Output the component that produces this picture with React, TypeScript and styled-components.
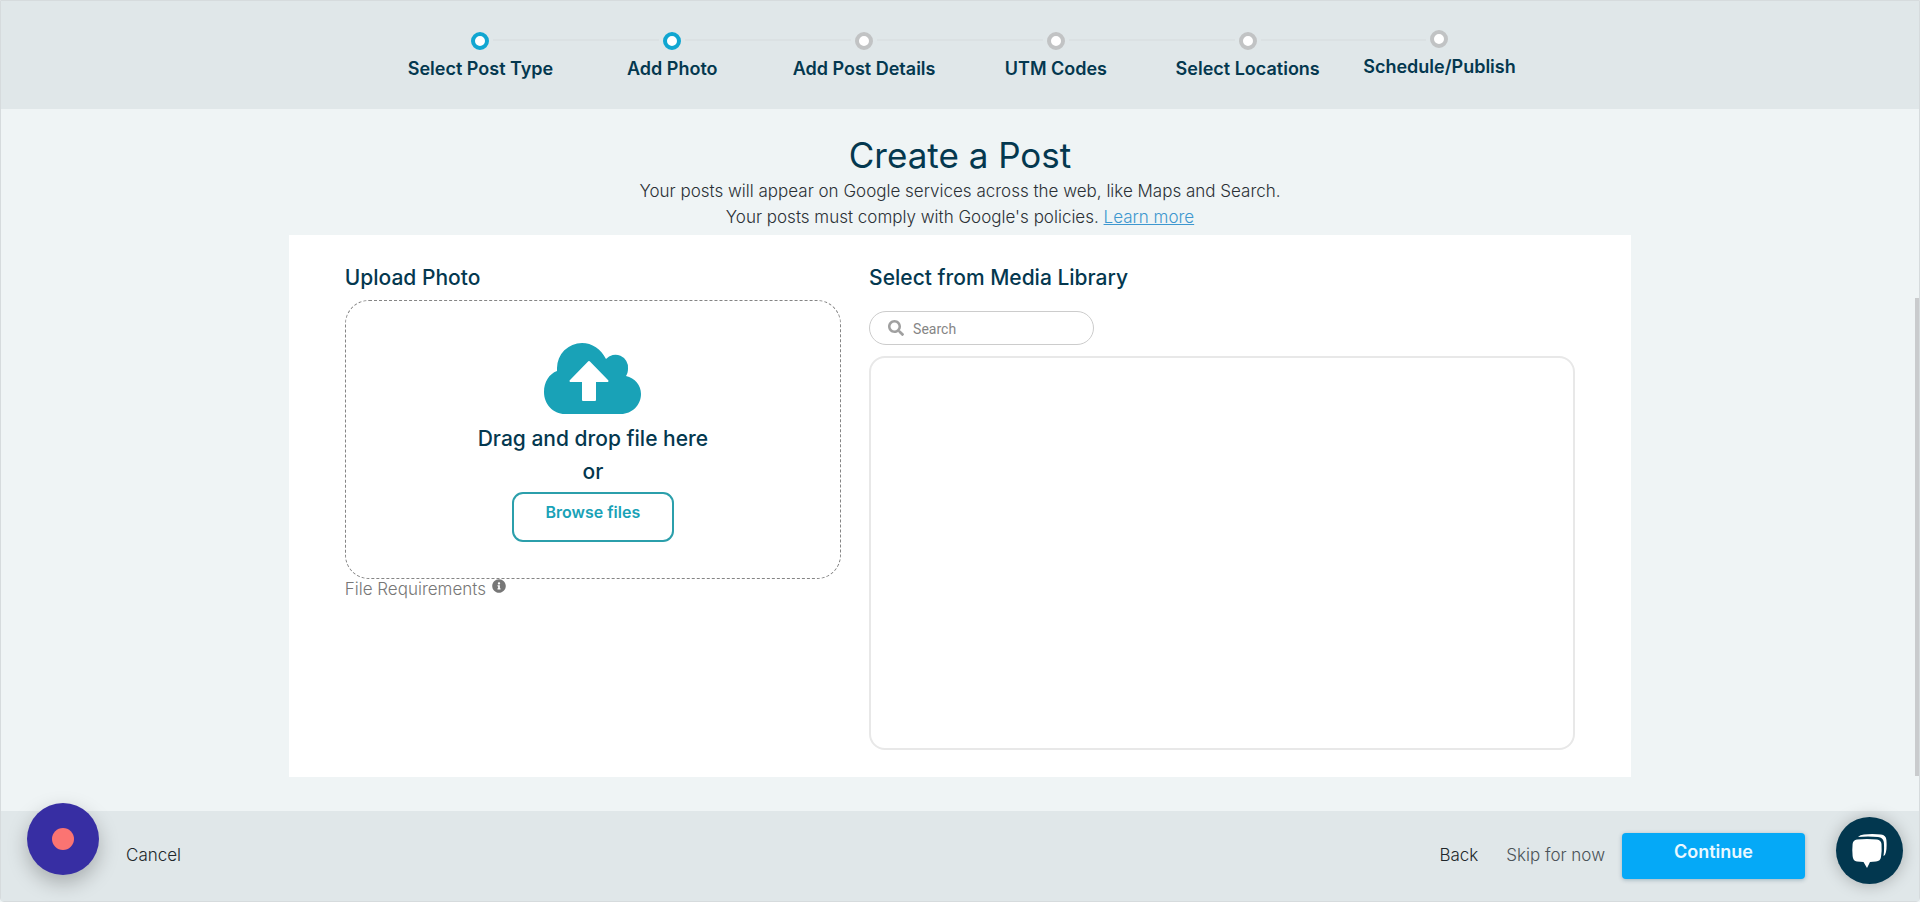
import React from "react";
import styled, { createGlobalStyle } from "styled-components";
import { FaSearch, FaInfoCircle } from "react-icons/fa";

const navy = "#04384f";
const teal = "#19a2b7";

const GlobalStyle = createGlobalStyle`
  *, *::before, *::after { box-sizing: border-box; }
  body { margin: 0; background: #eff4f5; font-family: Inter, "Open Sans", sans-serif; color: #2b3136; }
  button { font-family: inherit; cursor: pointer; }
  h1, h2, p, ol { margin: 0; padding: 0; font-weight: 400; }
`;

const Page = styled.div`
  position: relative;
  display: flex;
  flex-direction: column;
  min-height: 100vh;
  border: 1px solid #d6dbdd;
  border-radius: 0 0 4px 4px;
`;

const Header = styled.header`
  display: flex;
  justify-content: center;
  height: 108px;
  padding-top: 31px;
  background: #e0e7e9;
`;

const Steps = styled.ol`
  display: grid;
  grid-template-columns: repeat(6, 1fr);
  width: 60%;
  list-style: none;
`;

const Step = styled.li<{ $raised?: boolean }>`
  position: relative;
  display: flex;
  flex-direction: column;
  align-items: center;
  gap: 7px;
  margin-top: ${(p) => (p.$raised ? "-2px" : "0")};
  font-size: 18px;
  line-height: 24px;
  font-weight: 600;
  color: ${navy};
  white-space: nowrap;

  &:not(:last-child)::after {
    content: "";
    position: absolute;
    top: 7px;
    left: calc(50% + 13px);
    width: calc(100% - 26px);
    height: 2px;
    background: #dbe1e3;
  }
`;

const Dot = styled.span<{ $active?: boolean }>`
  width: 18px;
  height: 18px;
  border: 4px solid ${(p) => (p.$active ? "#11a6d1" : "#c1c3c4")};
  border-radius: 50%;
  background: #fff;
`;

const Main = styled.main`
  flex: 1;
  display: flex;
  flex-direction: column;
  align-items: center;
  padding: 24px 0 34px;
`;

const Title = styled.h1`
  font-size: 35px;
  line-height: 45px;
  color: ${navy};
`;

const Intro = styled.p`
  margin-bottom: 5px;
  font-size: 17px;
  line-height: 26px;
  font-weight: 300;
  text-align: center;
`;

const LearnMore = styled.a`
  color: #3d97cf;
  text-decoration: underline;
`;

const Card = styled.div`
  flex: 1;
  display: grid;
  grid-template-columns: 5fr 7fr;
  width: 70%;
  padding: 30px 42px 27px;
  background: #fff;
`;

const Column = styled.section`
  display: flex;
  flex-direction: column;
  padding: 0 14px;
`;

const Heading = styled.h2`
  font-size: 21px;
  line-height: 26px;
  font-weight: 500;
  color: ${navy};
`;

const DropZone = styled.div`
  display: flex;
  flex-direction: column;
  align-items: center;
  height: 279px;
  margin-top: 9px;
  padding-top: 42px;
  border: 1px dashed #858585;
  border-radius: 24px;
  font-size: 21px;
  line-height: 33px;
  font-weight: 500;
  color: ${navy};
`;

const CloudIcon = styled.svg`
  width: 97px;
  height: 71px;
  margin-bottom: 8px;
`;

const BrowseButton = styled.button`
  width: 162px;
  height: 50px;
  margin-top: 4px;
  padding: 0 0 10px;
  border: 2px solid #2b9fab;
  border-radius: 11px;
  background: #fff;
  color: ${teal};
  font-size: 16px;
  line-height: 20px;
  font-weight: 600;
`;

const Requirements = styled.p`
  display: flex;
  gap: 6px;
  font-size: 17px;
  line-height: 20px;
  font-weight: 300;
  color: #777;

  svg { width: 14px; height: 14px; }
`;

const SearchBox = styled.label`
  display: flex;
  align-items: center;
  gap: 9px;
  width: 225px;
  height: 34px;
  margin: 20px 0 11px;
  padding: 0 18px;
  border: 1px solid #ccc;
  border-radius: 17px;
  color: #a0a0a0;

  svg { flex: none; width: 16px; height: 16px; }
`;

const SearchInput = styled.input`
  flex: 1;
  min-width: 0;
  padding: 2px 0 0;
  border: 0;
  outline: 0;
  background: transparent;
  font: 14px/20px Roboto, sans-serif;

  &::placeholder { color: #858585; opacity: 1; }
`;

const MediaGrid = styled.div`
  flex: 1;
  min-height: 300px;
  border: 2px solid #e8e8e8;
  border-radius: 16px;
`;

const Footer = styled.footer`
  display: flex;
  align-items: center;
  height: 90px;
  padding: 0 114px 0 125px;
  background: #e0e7e9;
`;

const TextButton = styled.button<{ $soft?: boolean }>`
  padding: 0 0 2px;
  border: 0;
  background: none;
  font-size: 17px;
  line-height: 20px;
  font-weight: 300;
  color: ${(p) => (p.$soft ? "#4b5358" : "#20272b")};
`;

const Actions = styled.div`
  display: flex;
  align-items: center;
  gap: 28px;
  margin-left: auto;
`;

const Continue = styled.button`
  width: 183px;
  height: 46px;
  margin-left: -11px;
  padding: 0 0 8px;
  border: 0;
  border-radius: 4px;
  background: #05a9f7;
  box-shadow: 0 1px 4px rgba(0, 60, 90, 0.3);
  color: #eaf8ff;
  font-size: 18px;
  line-height: 20px;
  font-weight: 600;
`;

const RecordButton = styled.button`
  position: fixed;
  left: 27px;
  bottom: 27px;
  display: grid;
  place-items: center;
  width: 72px;
  height: 72px;
  padding: 0;
  border: 0;
  border-radius: 50%;
  background: #372ea3;
  box-shadow: 0 8px 20px rgba(0, 0, 0, 0.25);

  &::before {
    content: "";
    width: 22px;
    height: 22px;
    border-radius: 50%;
    background: #fb7472;
  }
`;

const ChatButton = styled.button`
  position: fixed;
  right: 17px;
  bottom: 18px;
  display: grid;
  place-items: center;
  width: 67px;
  height: 67px;
  padding: 0;
  border: 0;
  border-radius: 50%;
  background: #02374f;
  box-shadow: 0 1px 16px rgba(0, 0, 0, 0.25);
`;

const ScrollThumb = styled.div`
  position: fixed;
  top: 33%;
  right: 1px;
  width: 4px;
  height: 53%;
  background: #c9cbcd;
`;

const steps = [
  { label: "Select Post Type", active: true },
  { label: "Add Photo", active: true },
  { label: "Add Post Details" },
  { label: "UTM Codes" },
  { label: "Select Locations" },
  { label: "Schedule/Publish", raised: true },
];

export default function App() {
  return (
    <>
      <GlobalStyle />
      <Page>
        <Header>
          <Steps>
            {steps.map((s) => (
              <Step key={s.label} $raised={s.raised}>
                <Dot $active={s.active} />
                {s.label}
              </Step>
            ))}
          </Steps>
        </Header>
        <Main>
          <Title>Create a Post</Title>
          <Intro>
            Your posts will appear on Google services across the web, like Maps and Search.
            <br />
            Your posts must comply with Google's policies. <LearnMore href="#">Learn more</LearnMore>
          </Intro>
          <Card>
            <Column>
              <Heading>Upload Photo</Heading>
              <DropZone>
                <CloudIcon viewBox="0 0 97 71" aria-hidden="true">
                  <path
                    fill={teal}
                    d="M21 71C9 71 0 61 0 49C0 39 5 31 13 28V25A25 25 0 0 1 38 0C48 0 57 6 62 16A12.600 12.600 0 0 1 84 25.500C84 28 83.500 31 82 33C91 35 97 42 97 51C97 62 88 71 77 71Z"
                  />
                  <path
                    fill="#fff"
                    stroke="#fff"
                    strokeWidth="2"
                    strokeLinejoin="round"
                    d="M45 19L63.5 38H51V57H39V38H26.5Z"
                  />
                </CloudIcon>
                <span>Drag and drop file here</span>
                <span>or</span>
                <BrowseButton type="button">Browse files</BrowseButton>
              </DropZone>
              <Requirements>
                File Requirements <FaInfoCircle />
              </Requirements>
            </Column>
            <Column>
              <Heading>Select from Media Library</Heading>
              <SearchBox>
                <FaSearch />
                <SearchInput type="text" placeholder="Search" aria-label="Search" />
              </SearchBox>
              <MediaGrid />
            </Column>
          </Card>
        </Main>
        <Footer>
          <TextButton type="button">Cancel</TextButton>
          <Actions>
            <TextButton type="button">Back</TextButton>
            <TextButton type="button" $soft>Skip for now</TextButton>
            <Continue type="button">Continue</Continue>
          </Actions>
        </Footer>
        <ScrollThumb />
        <RecordButton type="button" aria-label="Record" />
        <ChatButton type="button" aria-label="Chat">
          <svg width="35" height="34" viewBox="0 0 35 34" aria-hidden="true">
            <path
              fill="#fff"
              d="M6 3Q8 .8 12 .5Q21 -.3 29 .6Q34 1.200 34.400 6Q35 13 34 18Q33.500 21 31.500 22Q32.500 15 31.800 8Q31 3.500 26 3Q16 2 6 3Z"
            />
            <path
              fill="#fff"
              d="M5 5.500Q15 4.500 25 5.500Q29 6 29.500 10Q30 17 29 23Q28.500 27 24 27.500L18 28L15 34L11.500 28L5 27.500Q1 27 .6 22Q0 16 .6 10Q1 6 5 5.500Z"
            />
          </svg>
        </ChatButton>
      </Page>
    </>
  );
}
